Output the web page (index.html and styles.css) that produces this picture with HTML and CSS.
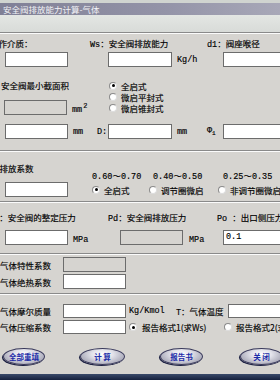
FILE: index.html
```html
<!DOCTYPE html>
<html>
<head>
<meta charset="utf-8">
<title>安全阀排放能力计算-气体</title>
<link rel="stylesheet" href="styles.css">
</head>
<body>
<div class="topstrip"></div>
<div class="title">安全阀排放能力计算-气体</div>
<div class="toolbar"></div>
<div class="groove"></div>

<section class="s1">
  <div class="row r1">
    <span class="lbl l-medium">工作介质：</span>
    <span class="lbl l-ws">Ws：安全阀排放能力</span>
    <span class="lbl">d1：阀座喉径</span>
  </div>
  <div class="row r2">
    <span class="in w63 ml5"></span>
    <span class="in w64 ml40"></span>
    <span class="unit u-kgh">Kg/h</span>
    <span class="in w70"></span>
  </div>
  <div class="row r3">
    <div class="area">
      <div class="lbl area-lbl">安全阀最小截面积</div>
      <div class="row area-row">
        <span class="in dis w63 ml4"></span>
        <span class="unit u-mm2">mm<span class="sup">2</span></span>
      </div>
    </div>
    <div class="radios">
      <div class="rad"><i class="rb on"></i>全启式</div>
      <div class="rad"><i class="rb"></i>微启平封式</div>
      <div class="rad"><i class="rb"></i>微启锥封式</div>
    </div>
  </div>
  <div class="row r4">
    <span class="in w63 ml5"></span>
    <span class="unit u-mm">mm</span>
    <span class="unit u-d">D:</span>
    <span class="in w64"></span>
    <span class="unit u-mm-b">mm</span>
    <span class="unit u-phi">Φ<span class="sub">1</span></span>
    <span class="in w70"></span>
  </div>
</section>
<div class="groove g1"></div>

<section class="s2">
  <div class="kcol">
    <div class="lbl k-lbl">K：排放系数</div>
    <span class="in w63 ml5 k-in"></span>
  </div>
  <div class="kopt ko1">
    <div class="range">0.60～0.70</div>
    <div class="rad"><i class="rb on"></i>全启式</div>
  </div>
  <div class="kopt ko2">
    <div class="range">0.40～0.50</div>
    <div class="rad"><i class="rb"></i>调节圈微启</div>
  </div>
  <div class="kopt ko3">
    <div class="range">0.25～0.35</div>
    <div class="rad"><i class="rb"></i>非调节圈微启</div>
  </div>
</section>
<div class="groove g2"></div>

<section class="s3">
  <div class="row r5">
    <span class="lbl l-ps">Ps：安全阀的整定压力</span>
    <span class="lbl l-pd">Pd：安全阀排放压力</span>
    <span class="lbl">Po ：出口侧压力</span>
  </div>
  <div class="row r6">
    <span class="in w63 ml5"></span>
    <span class="unit u-mpa">MPa</span>
    <span class="in dis w63"></span>
    <span class="unit u-mpa2">MPa</span>
    <span class="in w70 val">0.1</span>
  </div>
</section>
<div class="groove g3"></div>

<section class="s4">
  <div class="row r7">
    <span class="lbl l-gas">气体特性系数</span>
    <span class="in dis w63"></span>
  </div>
  <div class="row r8">
    <span class="lbl l-gas">气体绝热系数</span>
    <span class="in w63"></span>
  </div>
</section>
<div class="groove g4"></div>

<section class="s5">
  <div class="row r9">
    <span class="lbl l-gas">气体摩尔质量</span>
    <span class="in w63 h14"></span>
    <span class="unit u-kmol">Kg/Kmol</span>
    <span class="lbl l-t">T：气体温度</span>
    <span class="in w70 h14"></span>
  </div>
  <div class="row r10">
    <span class="lbl l-gas">气体压缩系数</span>
    <span class="in w63 h14"></span>
    <div class="rad rep1"><i class="rb on"></i>报告格式1(求Ws)</div>
    <div class="rad"><i class="rb"></i>报告格式2(求d1)</div>
  </div>
  <div class="row btns">
    <span class="btn b1">全部重填</span>
    <span class="btn b2">计 算</span>
    <span class="btn b3">报告书</span>
    <span class="btn b4">关 闭</span>
  </div>
</section>
<div class="bottombar"></div>
</body>
</html>
```

FILE: styles.css
```css
* { box-sizing: border-box; margin: 0; padding: 0; }
html, body { width: 280px; height: 380px; overflow: hidden; }
body {
  background: #d6d4d0;
  font-family: "Liberation Mono", "Noto Sans CJK SC", monospace;
  font-size: 8.5px;
  color: #000;
  -webkit-text-stroke: 0.15px #000;
}
.topstrip { height: 3px; background: #d0d4d0; }
.title {
  height: 12px;
  line-height: 12px;
  padding-left: 3px;
  color: #f2f2f6;
  -webkit-text-stroke: 0;
  background: linear-gradient(to right, #808096, #9494a8 60%, #a8a8b8);
  white-space: nowrap;
  font-family: "Noto Sans CJK SC", sans-serif;
}
.toolbar { height: 17px; background: linear-gradient(#e3e6e3, #d8dbd8); }
.groove { height: 2px; border-top: 1px solid #8a8a8a; border-bottom: 1px solid #fbfbfb; }
.g1 { margin-top: 11px; }
.g2 { margin-top: 4px; }
.g3 { margin-top: 8px; }
.g4 { margin-top: 4px; }

.row { display: flex; align-items: center; white-space: nowrap; }
.row > * { flex: none; }
.lbl { white-space: nowrap; flex: none; }
.unit { white-space: nowrap; flex: none; display: block; }

.in { display: block; flex: none; height: 15px; border: 1px solid #6c6c6c; background: #fff; }
.in.dis { background: #d6d4d0; }
.in.h14 { height: 14px; }
.w63 { width: 63px; }
.w64 { width: 64px; }
.w70 { width: 70px; }
.ml4 { margin-left: 4px; }
.ml5 { margin-left: 5px; }
.ml40 { margin-left: 40px; }
.val { padding-left: 2px; line-height: 12px; font-size: 8.5px; }

/* section 1 */
.r1 { margin-top: 2px; height: 15px; }
.l-medium { margin-left: -10px; width: 100px; }
.l-ws { width: 117px; }
.r2 { margin-top: 1px; height: 15px; }
.u-kgh { margin-left: 5px; width: 46px; }
.r3 { margin-top: 13px; height: 35px; align-items: flex-start; }
.area { width: 109px; flex: none; }
.area-lbl { margin-left: 1px; height: 14px; line-height: 14px; }
.area-row { margin-top: 6px; height: 15px; }
.u-mm2 { margin-left: 5px; align-self: flex-end; line-height: 10px; }
.sup { font-size: 7px; vertical-align: 4px; margin-left: 1px; }
.radios { display: flex; flex-direction: column; }
.rad { display: flex; align-items: center; gap: 4px; height: 11px; white-space: nowrap; font-family: "Noto Sans CJK SC", sans-serif; }
.rb {
  width: 8px; height: 8px; border-radius: 50%; flex: none;
  border: 1px solid #8a8a8a; border-right-color: #dcdcdc; border-bottom-color: #dcdcdc;
  background: #fff;
  display: flex; align-items: center; justify-content: center;
}
.rb.on::after { content: ""; width: 3px; height: 3px; border-radius: 50%; background: #000; }
.r4 { margin-top: 9px; height: 15px; }
.u-mm { margin-left: 5px; width: 24px; }
.u-d { width: 11px; }
.u-mm-b { margin-left: 5px; width: 30px; }
.u-phi { width: 16px; }
.sub { font-size: 6px; vertical-align: -2px; }

/* section 2 */
.s2 { display: flex; padding-top: 11px; }
.kcol { width: 92px; flex: none; }
.k-lbl { margin-left: -14px; height: 14px; line-height: 14px; }
.k-in { margin-top: 5px; }
.kopt { margin-top: 8px; flex: none; }
.range { height: 12px; line-height: 12px; white-space: nowrap; }
.kopt .rad { height: 13px; }
.ko1 { width: 57px; }
.ko2 { width: 69px; }
.ko2 .range { padding-left: 4px; }
.ko3 .range { padding-left: 5px; }

/* section 3 */
.r5 { margin-top: 7px; height: 14px; }
.l-ps { margin-left: -11px; width: 119px; }
.l-pd { width: 109px; }
.r6 { margin-top: 6px; height: 15px; }
.u-mpa { margin-left: 5px; width: 47px; align-self: flex-end; line-height: 10px; }
.u-mpa2 { margin-left: 6px; width: 34px; align-self: flex-end; line-height: 10px; }

/* section 4 */
.r7, .r8 { margin-top: 2px; height: 15px; }
.l-gas { width: 63px; font-family: "Noto Sans CJK SC", sans-serif; }

/* section 5 */
.r9 { margin-top: 9px; height: 14px; }
.u-kmol { margin-left: 3px; width: 47px; }
.l-t { width: 52px; }
.r10 { margin-top: 2px; height: 14px; }
.rep1 { margin-left: 3px; width: 95px; gap: 5px; }

.btns { margin-top: 14px; height: 17px; }
.btn {
  display: flex; align-items: center; justify-content: center;
  height: 17px; border-radius: 50%;
  background: radial-gradient(ellipse at 50% 35%, #ffffff 0%, #e2e2ea 35%, #a4a4b4 80%, #7a7a8c 100%);
  border: 1px solid #3a3a5c;
  box-shadow: -1px 1px 0 #1e2244;
  color: #1a2aa8;
  -webkit-text-stroke: 0;
  font-family: "Noto Sans CJK SC", sans-serif;
  font-weight: bold;
  font-size: 7.5px;
  white-space: pre;
}
.b1 { margin-left: 3px; width: 42px; }
.b2 { margin-left: 35px; width: 45px; }
.b3 { margin-left: 35px; width: 43px; }
.b4 { margin-left: 37px; width: 43px; }

.bottombar { margin-top: 9px; height: 6px; background: linear-gradient(#3a4a6a, #16213e); }
```
